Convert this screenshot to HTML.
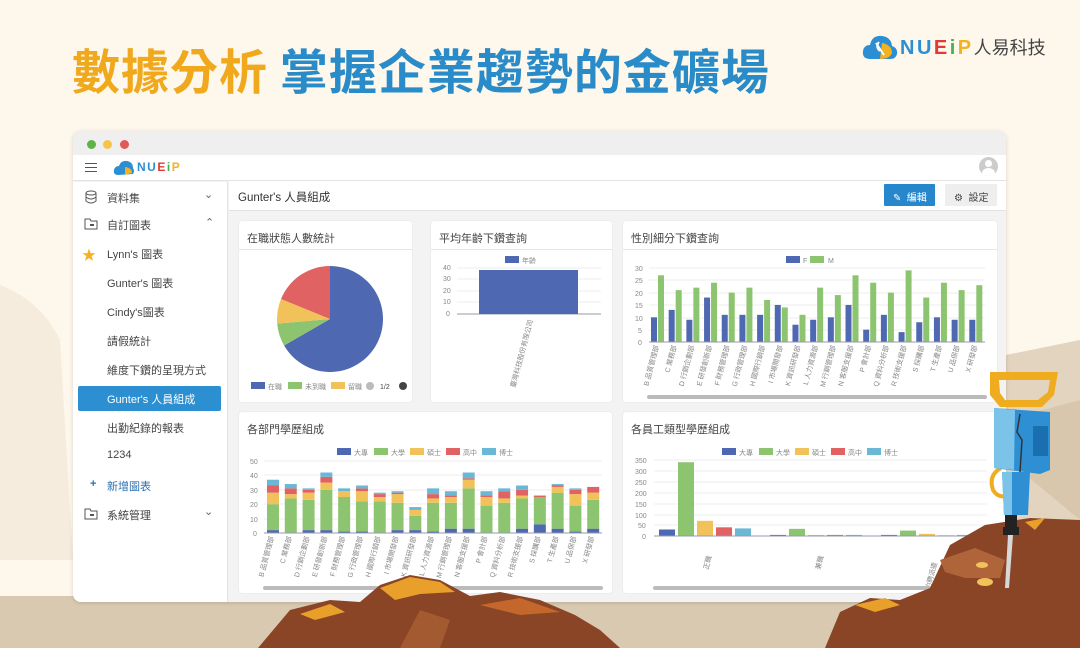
<!DOCTYPE html>
<html><head><meta charset="utf-8"><style>
*{margin:0;padding:0;box-sizing:border-box}
body{width:1080px;height:648px;overflow:hidden;background:#fdf7ec;font-family:"Liberation Sans","Noto Sans CJK TC",sans-serif;position:relative;color:#333}
.a{position:absolute}
.t{font-size:11px;white-space:nowrap}
.card{position:absolute;background:#fff;border-radius:3px;box-shadow:0 0 1px #ccc}
.card .h{height:29px;border-bottom:1px solid #e6e6e6;padding:9px 0 0 8px;font-size:11px;color:#444}
.si{position:absolute;left:107px;font-size:11px;color:#444}
</style></head><body>
<svg class="a" style="left:0;top:0" width="1080" height="648">
<path d="M0 285 Q40 300 60 340 L73 560 L0 560Z" fill="#f5ecdd"/>
<path d="M1006 355 L1080 340 L1080 648 L1006 648Z" fill="#e3d4bf"/>
<path d="M1006 420 L1080 400 L1080 520 L1020 470Z" fill="#d8c6ad"/>
<rect x="0" y="596" width="1080" height="52" fill="#d9c9b1"/>
</svg>
<div class="a" style="left:72px;top:38px;font-size:48px;font-weight:bold;letter-spacing:1px;font-family:'Noto Sans CJK TC',sans-serif;line-height:60px;white-space:nowrap"><span style="color:#f0a91d">數據分析</span> <span style="color:#2a8bc9">掌握企業趨勢的金礦場</span></div>
<svg class="a" style="left:862px;top:33px" width="36" height="28"><path d="M8 26 Q0 26 1 18 Q2 12 8 12 Q10 2 20 3 Q29 4 30 13 Q36 15 35 21 Q34 26 28 26Z" fill="#2d8fd3"/><path d="M20 10 Q30 12 30 20 Q28 26 18 26Z" fill="#f3b220"/><path d="M14 10 L22 22 M17 9 Q13 14 18 18" stroke="#fff" stroke-width="2" fill="none"/></svg>
<div class="a" style="left:900px;top:34px;font-size:20px;font-weight:bold;letter-spacing:2.5px;white-space:nowrap"><span style="color:#2d8fd3">NU</span><span style="color:#e53935">E</span><span style="color:#4caf50">i</span><span style="color:#f3b220">P</span><span style="color:#444;font-weight:normal;font-size:18px;letter-spacing:0">人易科技</span></div>
<div class="a" style="left:73px;top:131px;width:933px;height:471px;background:#f3f3f3;border-radius:8px;overflow:hidden;box-shadow:0 1px 4px rgba(0,0,0,.15)">
<div class="a" style="left:0;top:0;width:933px;height:24px;background:#efefef"></div>
<div class="a" style="left:14px;top:9px;width:9px;height:9px;border-radius:50%;background:#5fb344"></div>
<div class="a" style="left:30px;top:9px;width:9px;height:9px;border-radius:50%;background:#f5c449"></div>
<div class="a" style="left:47px;top:9px;width:9px;height:9px;border-radius:50%;background:#e25a58"></div>
<div class="a" style="left:0;top:24px;width:933px;height:26px;background:#fff;border-bottom:1px solid #e2e2e2"></div>
<div class="a" style="left:12px;top:32px;width:12px;height:1px;background:#555;box-shadow:0 4px 0 #555,0 8px 0 #555"></div>
<svg class="a" style="left:40px;top:28px" width="22" height="18"><path d="M5 16 Q0 16 1 11 Q2 7 6 7 Q8 1 14 2 Q20 3 20 9 Q22 12 20 15Z" fill="#2d8fd3"/><path d="M12 8 Q19 9 19 14 L12 16Z" fill="#f3b220"/></svg>
<div class="a" style="left:64px;top:29px;font-size:12px;font-weight:bold;letter-spacing:1.5px"><span style="color:#2d8fd3">NU</span><span style="color:#e53935">E</span><span style="color:#4caf50">i</span><span style="color:#f3b220">P</span></div>
<div class="a" style="left:906px;top:26px;width:19px;height:19px;border-radius:50%;background:#ccc;overflow:hidden"><div class="a" style="left:6px;top:3px;width:7px;height:7px;border-radius:50%;background:#fff"></div><div class="a" style="left:3px;top:11px;width:13px;height:10px;border-radius:50%;background:#fff"></div></div>
<div class="a" style="left:0;top:51px;width:155px;height:420px;background:#fff;border-right:1px solid #e2e2e2"></div>
<div class="a" style="left:5px;top:255px;width:143px;height:25px;background:#2b8fd2;border-radius:2px"></div>
</div>
<svg class="a" style="left:84px;top:190px" width="14" height="14"><ellipse cx="7" cy="3" rx="5" ry="2" fill="none" stroke="#555"/><path d="M2 3v8q5 4 10 0V3M2 7q5 4 10 0" fill="none" stroke="#555"/></svg>
<svg class="a" style="left:84px;top:218px" width="14" height="12"><path d="M1 1h5l1 2h6v8H1Z" fill="none" stroke="#555"/><rect x="6" y="6" width="4" height="2" fill="#555"/></svg>
<div class="a" style="left:82px;top:245px;color:#f3b220;font-size:14px">★</div>
<svg class="a" style="left:84px;top:508px" width="14" height="12"><path d="M1 1h5l1 2h6v8H1Z" fill="none" stroke="#555"/><rect x="6" y="6" width="4" height="2" fill="#555"/></svg>
<div class="si" style="top:190px">資料集</div><div class="a t" style="left:204px;top:188px;color:#666">⌄</div>
<div class="si" style="top:217px">自訂圖表</div><div class="a t" style="left:205px;top:216px;color:#666">⌃</div>
<div class="si" style="top:246px">Lynn's 圖表</div>
<div class="si" style="top:275px">Gunter's 圖表</div>
<div class="si" style="top:304px">Cindy's圖表</div>
<div class="si" style="top:333px">請假統計</div>
<div class="si" style="top:362px">維度下鑽的呈現方式</div>
<div class="si" style="top:391px;color:#fff">Gunter's 人員組成</div>
<div class="si" style="top:420px">出勤紀錄的報表</div>
<div class="si" style="top:449px">1234</div>
<div class="si" style="top:478px;color:#2b6fb0"><span style="position:absolute;left:-17px;font-weight:bold">+</span>新增圖表</div>
<div class="si" style="top:507px">系統管理</div><div class="a t" style="left:204px;top:505px;color:#666">⌄</div>
<div class="a" style="left:229px;top:181px;width:777px;height:30px;background:#fff;border-bottom:1px solid #e2e2e2"></div>
<div class="a t" style="left:238px;top:189px;font-size:11.5px">Gunter's 人員組成</div>
<div class="a t" style="left:884px;top:184px;width:51px;height:22px;background:#2787cd;color:#fff;padding:5px 0 0 9px;font-size:10px;border-radius:1px">✎ &nbsp;編輯</div>
<div class="a t" style="left:945px;top:184px;width:52px;height:22px;background:#eee;color:#444;padding:5px 0 0 9px;font-size:10px">⚙ &nbsp;設定</div>
<div class="card" style="left:239px;top:221px;width:173px;height:181px"><div class="h">在職狀態人數統計</div></div>
<div class="card" style="left:431px;top:221px;width:181px;height:181px"><div class="h">平均年齡下鑽查詢</div></div>
<div class="card" style="left:623px;top:221px;width:374px;height:181px"><div class="h">性別細分下鑽查詢</div></div>
<div class="card" style="left:239px;top:412px;width:373px;height:181px"><div class="h" style="border:none">各部門學歷組成</div></div>
<div class="card" style="left:623px;top:412px;width:383px;height:181px"><div class="h" style="border:none">各員工類型學歷組成</div></div>
<svg class="a" style="left:0;top:0" width="1080" height="648" font-family="Liberation Sans,Noto Sans CJK TC,sans-serif" font-size="7" fill="#888">
<g transform="translate(330,319)">
<path d="M0 0 L0 -53 A53 53 0 1 1 -45.9 26.5Z" fill="#4e68b2"/>
<path d="M0 0 L-45.9 26.5 A53 53 0 0 1 -52.8 4.6Z" fill="#8dc46f"/>
<path d="M0 0 L-52.8 4.6 A53 53 0 0 1 -49 -20Z" fill="#f2c25a"/>
<path d="M0 0 L-49 -20 A53 53 0 0 1 0 -53Z" fill="#e06262"/>
</g>
<rect x="251" y="382" width="14" height="7" fill="#4e68b2"/><text x="268" y="389">在職</text>
<rect x="288" y="382" width="14" height="7" fill="#8dc46f"/><text x="305" y="389">未到職</text>
<rect x="331" y="382" width="14" height="7" fill="#f2c25a"/><text x="348" y="389">留職</text>
<circle cx="370" cy="386" r="4" fill="#bbb"/><text x="380" y="389" fill="#444">1/2</text><circle cx="403" cy="386" r="4" fill="#444"/>
<rect x="505" y="256" width="14" height="7" fill="#4e68b2"/><text x="522" y="263">年齡</text>
<g stroke="#eee"><line x1="457" y1="268" x2="601" y2="268"/><line x1="457" y1="279" x2="601" y2="279"/><line x1="457" y1="291" x2="601" y2="291"/><line x1="457" y1="302" x2="601" y2="302"/></g>
<line x1="457" y1="314" x2="601" y2="314" stroke="#99a"/>
<rect x="479" y="270" width="99" height="44" fill="#4e68b2"/>
<text x="443" y="270">40</text><text x="443" y="281">30</text><text x="443" y="293">20</text><text x="443" y="304">10</text><text x="446" y="316">0</text>
<text transform="translate(515,388) rotate(-75)">臺灣科技股份有限公司</text>
<rect x="786" y="256" width="14" height="7" fill="#4e68b2"/><text x="803" y="263">F</text>
<rect x="810" y="256" width="14" height="7" fill="#8dc46f"/><text x="828" y="263">M</text>
<g stroke="#eee"><line x1="649" y1="268" x2="985" y2="268"/><line x1="649" y1="280" x2="985" y2="280"/><line x1="649" y1="293" x2="985" y2="293"/><line x1="649" y1="305" x2="985" y2="305"/><line x1="649" y1="318" x2="985" y2="318"/><line x1="649" y1="330" x2="985" y2="330"/></g>
<text x="635" y="271">30</text><text x="635" y="283">25</text><text x="635" y="296">20</text><text x="635" y="308">15</text><text x="635" y="321">10</text><text x="638" y="333">5</text><text x="638" y="345">0</text>
<g id="c3"></g>
<line x1="649" y1="342" x2="985" y2="342" stroke="#99a"/>
<rect x="647" y="395" width="340" height="4" rx="2" fill="#bbb"/>
<rect x="337" y="448" width="14" height="7" fill="#4e68b2"/><text x="354" y="455">大專</text>
<rect x="374" y="448" width="14" height="7" fill="#8dc46f"/><text x="391" y="455">大學</text>
<rect x="410" y="448" width="14" height="7" fill="#f2c25a"/><text x="427" y="455">碩士</text>
<rect x="446" y="448" width="14" height="7" fill="#e06262"/><text x="463" y="455">高中</text>
<rect x="482" y="448" width="14" height="7" fill="#6ab7d6"/><text x="499" y="455">博士</text>
<g stroke="#eee"><line x1="264" y1="461" x2="602" y2="461"/><line x1="264" y1="475" x2="602" y2="475"/><line x1="264" y1="490" x2="602" y2="490"/><line x1="264" y1="504" x2="602" y2="504"/><line x1="264" y1="519" x2="602" y2="519"/></g>
<text x="250" y="464">50</text><text x="250" y="478">40</text><text x="250" y="493">30</text><text x="250" y="507">20</text><text x="250" y="522">10</text><text x="253" y="536">0</text>
<g id="c4"></g>
<line x1="264" y1="533" x2="602" y2="533" stroke="#99a"/>
<rect x="263" y="586" width="340" height="4" rx="2" fill="#bbb"/>
<rect x="722" y="448" width="14" height="7" fill="#4e68b2"/><text x="739" y="455">大專</text>
<rect x="759" y="448" width="14" height="7" fill="#8dc46f"/><text x="776" y="455">大學</text>
<rect x="795" y="448" width="14" height="7" fill="#f2c25a"/><text x="812" y="455">碩士</text>
<rect x="831" y="448" width="14" height="7" fill="#e06262"/><text x="848" y="455">高中</text>
<rect x="867" y="448" width="14" height="7" fill="#6ab7d6"/><text x="884" y="455">博士</text>
<g stroke="#eee"><line x1="654" y1="460" x2="987" y2="460"/><line x1="654" y1="471" x2="987" y2="471"/><line x1="654" y1="482" x2="987" y2="482"/><line x1="654" y1="493" x2="987" y2="493"/><line x1="654" y1="504" x2="987" y2="504"/><line x1="654" y1="515" x2="987" y2="515"/><line x1="654" y1="525" x2="987" y2="525"/></g>
<text x="635" y="463">350</text><text x="635" y="474">300</text><text x="635" y="485">250</text><text x="635" y="496">200</text><text x="635" y="507">150</text><text x="635" y="518">100</text><text x="638" y="528">50</text><text x="642" y="539">0</text>
<g id="c5"></g>
<line x1="654" y1="536" x2="987" y2="536" stroke="#99a"/>
<text transform="translate(708,570) rotate(-75)">正職</text>
<text transform="translate(820,570) rotate(-75)">兼職</text>
<text transform="translate(930,590) rotate(-75)">約聘派遣</text>
<rect x="653" y="586" width="340" height="4" rx="2" fill="#bbb"/>
</svg>
<svg class="a" style="left:0;top:0" width="1080" height="648">
<path d="M258 648 L290 610 L330 600 L360 602 L380 585 L410 575 L440 580 L470 596 L500 592 L540 600 L575 615 L600 630 L620 648Z" fill="#8a4526"/>
<path d="M380 588 L410 577 L440 582 L455 592 L420 594 L395 600Z" fill="#e9a02a"/>
<path d="M300 614 L330 604 L345 612 L315 620Z" fill="#e9a02a"/>
<path d="M480 605 L520 598 L560 612 L520 615Z" fill="#c4672c"/>
<path d="M420 610 L450 620 L440 648 L400 648Z" fill="#a45a30"/>
<path d="M825 648 L840 612 L870 598 L900 600 L930 588 L950 545 L985 525 L1030 518 L1080 520 L1080 648Z" fill="#8a4526"/>
<path d="M940 560 L975 548 L1005 560 L1000 578 L965 578 L945 572Z" fill="#b0643a"/>
<path d="M855 605 L885 598 L900 605 L875 612Z" fill="#e9a02a"/>
<path d="M1025 522 L1045 518 L1035 530Z" fill="#e9a02a"/>
<ellipse cx="982" cy="565" rx="6" ry="3" fill="#f2c25a"/><ellipse cx="985" cy="582" rx="8" ry="4" fill="#f2c25a"/>
<path d="M990 372 L1058 372 L1054 395 L1042 407 L1000 407 L990 395Z M999 380 L1000 393 L1005 400 L1038 400 L1048 392 L1050 380Z" fill="#efac1f" fill-rule="evenodd"/>
<path d="M1001 468 Q988 475 993 490 Q998 498 1006 496" fill="none" stroke="#efac1f" stroke-width="4"/>
<path d="M994 408 L1050 412 L1050 470 L1040 474 L994 468Z" fill="#2f8fd3"/>
<path d="M994 408 L1015 410 L1014 470 L994 468Z" fill="#7cc3ea"/>
<rect x="1033" y="426" width="15" height="30" fill="#1a6fb0"/>
<path d="M1020 414 L1017 432 L1022 440 L1020 472" fill="none" stroke="#333" stroke-width="1.5"/>
<path d="M1002 472 L1030 472 L1028 515 L1004 515Z" fill="#2f8fd3"/>
<path d="M1002 472 L1012 472 L1012 515 L1004 515Z" fill="#7cc3ea"/>
<rect x="1005" y="515" width="12" height="12" fill="#222"/><rect x="1003" y="527" width="16" height="8" fill="#222"/>
<path d="M1008 535 L1013 535 L1009 588 L1005 588Z" fill="#d8d8d8"/>
</svg>
<script>
(function(){
var ns="http://www.w3.org/2000/svg";
function r(g,x,y,w,h,c){var e=document.createElementNS(ns,"rect");e.setAttribute("x",x);e.setAttribute("y",y);e.setAttribute("width",w);e.setAttribute("height",h);e.setAttribute("fill",c);g.appendChild(e);}
function t(g,x,y,s){var e=document.createElementNS(ns,"text");e.setAttribute("transform","translate("+x+","+y+") rotate(-75)");e.setAttribute("text-anchor","end");e.textContent=s;g.appendChild(e);}
var B="#4e68b2",G="#8dc46f",Y="#f2c25a",R="#e06262",C="#6ab7d6";
var g3=document.getElementById("c3");
var F=[10,13,9,18,11,11,11,15,7,9,10,15,5,11,4,8,10,9,9],M=[27,21,22,24,20,22,17,14,11,22,19,27,24,20,29,18,24,21,23];
var L3=["B 品質管理部","C 業務部","D 行銷企劃部","E 研發創新部","F 財務管理部","G 行政管理部","H 國際行銷部","I 市場開發部","K 資訊研發部","L 人力資源部","M 行銷管理部","N 客服支援部","P 會計部","Q 資料分析部","R 技術支援部","S 採購部","T 生產部","U 品保部","X 研發部"];
var gw=336/19;
for(var i=0;i<19;i++){var x=649+i*gw;r(g3,x+2,342-F[i]*2.47,6,F[i]*2.47,B);r(g3,x+9,342-M[i]*2.47,6,M[i]*2.47,G);t(g3,x+10,346,L3[i]);}
var g4=document.getElementById("c4");
var D=[[2,18,8,5,4],[0,24,3,4,3],[2,21,5,2,1],[2,28,5,4,3],[1,24,4,0,2],[1,21,7,2,2],[0,22,3,2,1],[2,19,6,1,1],[2,10,4,0,2],[1,20,3,3,4],[3,18,4,1,3],[3,28,6,1,4],[0,19,6,1,3],[0,21,3,5,2],[3,21,2,4,3],[6,19,0,1,0],[3,25,4,1,1],[1,18,8,3,1],[3,20,5,4,0]];
var cs=[B,G,Y,R,C];gw=338/19;
for(var i=0;i<19;i++){var x=264+i*gw+3,y=533;for(var k=0;k<5;k++){var h=D[i][k]*1.44;y-=h;r(g4,x,y,12,h,cs[k]);}t(g4,x+7,537,L3[i]);}
var g5=document.getElementById("c5");
var E=[[30,340,70,40,35],[5,33,5,5,5],[5,25,10,3,5]];
for(var j=0;j<3;j++)for(var k=0;k<5;k++){var h=E[j][k]*0.217;r(g5,659+j*111+k*19,536-h,16,h,cs[k]);}
})();
</script>
</body></html>
